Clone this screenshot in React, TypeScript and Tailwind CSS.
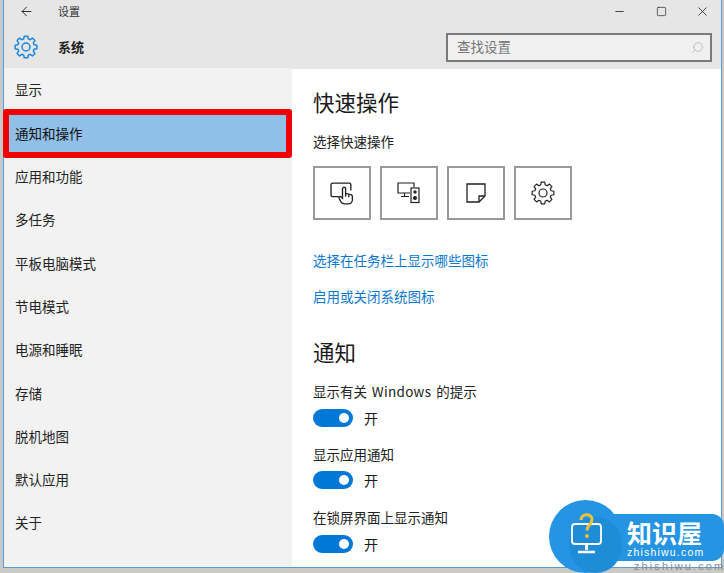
import { ArrowLeft, Minus, Square, X, Search } from "lucide-react"

const font = "font-['Noto_Sans_CJK_SC','Noto_Sans',sans-serif]"

const navItems = ["显示", "通知和操作", "应用和功能", "多任务", "平板电脑模式", "节电模式", "电源和睡眠", "存储", "脱机地图", "默认应用", "关于"]

// eight toothed gear, same outline as the windows settings glyph
function gearPath() {
  const pts: string[] = []
  for (let i = 0; i < 8; i++) {
    const a = (i * Math.PI) / 4
    const step = [
      [-0.27, 8.4],
      [-0.16, 11],
      [0.16, 11],
      [0.27, 8.4],
    ]
    step.forEach(([d, r]) => {
      pts.push(`${(12 + r * Math.cos(a + d)).toFixed(2)} ${(12 + r * Math.sin(a + d)).toFixed(2)}`)
    })
  }
  return `M${pts.join("L")}Z`
}

function Gear({ size, color, width }: { size: number; color: string; width: number }) {
  return (
    <svg width={size} height={size} viewBox="0 0 24 24" fill="none" stroke={color} strokeWidth={width} strokeLinejoin="round">
      <path d={gearPath()} />
      <circle cx="12" cy="12" r="4" />
    </svg>
  )
}

function TouchIcon() {
  return (
    <svg width="25" height="23" viewBox="0 0 24 22" fill="none" stroke="#222" strokeWidth="1.3">
      <path d="M9 14H2.5A1.5 1.5 0 0 1 1 12.500V2.500A1.500 1.500 0 0 1 2.500 1H18.500A1.500 1.500 0 0 1 20 2.500V8" />
      <path d="M12 6.500a1.500 1.500 0 0 1 3 0V11l4 .8a2.500 2.500 0 0 1 2.500 2.500V17a4 4 0 0 1-4 4H14a4 4 0 0 1-3.500-2l-1.800-3.500a1.200 1.200 0 0 1 2-1.200L12 15.500z" fill="#fff" />
      <path d="M15 11v3M18 12v2.500" />
    </svg>
  )
}

function ProjectIcon() {
  return (
    <svg width="24" height="22" viewBox="0 0 24 22" fill="none" stroke="#222" strokeWidth="1.2">
      <path d="M13 11H1V1H17V5" />
      <path d="M7.500 11v3M4 14.500h8" />
      <rect x="14" y="6" width="8" height="14.500" />
      <circle cx="18" cy="10" r="1.100" fill="#222" />
      <circle cx="18" cy="16" r="1.400" fill="#222" />
    </svg>
  )
}

function NoteIcon() {
  return (
    <svg width="20" height="20" viewBox="0 0 20 20" fill="none" stroke="#222" strokeWidth="1.3">
      <path d="M1 1H19V13L13 19H1Z" />
      <path d="M19 13H13V19" />
    </svg>
  )
}

function Toggle() {
  return (
    <div className="flex items-center gap-[11px] h-[20px]">
      <div className="flex items-center justify-end w-[40px] h-[18px] rounded-full bg-[#0078d7] pr-[4px]">
        <div className="w-[10px] h-[10px] rounded-full bg-white" />
      </div>
      <span className="text-[14px] leading-[20px] text-[#1a1a1a]">开</span>
    </div>
  )
}

function Logo() {
  return (
    <div className="absolute left-[549px] top-[500px] w-[175px] h-[73px]">
      <div className="absolute left-[60px] top-[14px] w-[115px] h-[47px] rounded-r-[12px] bg-[#2595e3]" />
      <div className="absolute left-0 top-0 w-[73px] h-[73px] rounded-full bg-[#2595e3]" />
      <div className="absolute left-[20px] top-[17px] w-[53px] h-[56px] rounded-full bg-[#1f8cd8]" />
      <svg className="absolute left-[20px] top-[12px]" width="36" height="44" viewBox="0 0 36 44" fill="none">
        <rect x="3" y="12" width="29" height="20" rx="3" stroke="#fff" strokeWidth="1.800" />
        <path d="M17.500 32v6" stroke="#fff" strokeWidth="3" />
        <path d="M9 40h17" stroke="#fff" strokeWidth="2.500" />
        <path d="M12 8c0-7 11-7 11-.5 0 5-5 5-5 11" stroke="#f4c138" strokeWidth="3" />
        <circle cx="18" cy="24" r="2" fill="#f4c138" />
      </svg>
      <div className="absolute left-[78px] top-[18px] text-[25px] leading-[28px] font-bold text-white">知识屋</div>
      <div className="absolute left-[78px] top-[47px] text-[10.500px] leading-[11px] text-white tracking-[1.200px] font-['Liberation_Sans',sans-serif]">zhishiwu.com</div>
      <div className="absolute left-[85px] top-[61px] text-[11px] leading-[11px] text-[#8a8a8a] tracking-[2.100px] font-['Liberation_Sans',sans-serif]">zhishiwu.com</div>
    </div>
  )
}

export default function App() {
  return (
    <div className={`relative w-[724px] h-[573px] overflow-hidden bg-[#c9c9c7] pl-[3px] pr-[2px] pb-[5px] ${font}`}>
      <div className="flex flex-col h-full border-x border-b border-[#5b9bd5] bg-white">
        {/* header */}
        <div className="shrink-0 h-[69px] bg-[#e6e6e6]">
          <div className="flex items-center h-[22px] pl-[15px]">
            <ArrowLeft size={15} strokeWidth={1.5} color="#222" />
            <span className="ml-[24px] text-[11px] text-[#333]">设置</span>
            <div className="flex items-center ml-auto text-[#222]">
              <Minus size={13} strokeWidth={1.5} />
              <Square size={11} strokeWidth={1.5} className="ml-[30px]" />
              <X size={15} strokeWidth={1.3} className="ml-[28px] mr-[11px]" />
            </div>
          </div>
          <div className="flex items-center h-[47px] pl-[10px] pt-[3px]">
            <Gear size={24} color="#1b86de" width={1.5} />
            <span className="ml-[20px] text-[13px] font-bold text-[#222]">系统</span>
            <div className="flex items-center ml-auto mr-[9px] w-[266px] h-[29px] border-2 border-[#7a7a7a] bg-[#f0f0f0] pl-[9px] pr-[6px]">
              <span className="-mt-[2px] text-[13.500px] text-[#777]">查找设置</span>
              <Search size={13} strokeWidth={1} color="#999" className="ml-auto -scale-x-100" />
            </div>
          </div>
        </div>

        <div className="flex flex-1 min-h-0">
          {/* sidebar */}
          <div className="flex flex-col shrink-0 w-[288px] bg-[#f2f2f2] -mt-[1.250px]">
            {navItems.map((item, i) =>
              i === 1 ? (
                <div key={item} className="flex items-center h-[49px] -ml-[1px] mt-[-1.750px] mb-[-3.750px] border-[6px] border-[#f00000] rounded-[3px] bg-[#90c0e8] pl-[6px] pb-[2px] text-[13.500px] text-[#111] relative">
                  {item}
                </div>
              ) : (
                <div key={item} className="flex items-center h-[43.300px] pl-[11px] text-[13.500px] text-[#222]">
                  {item}
                </div>
              ),
            )}
          </div>

          {/* content */}
          <div className="flex-1 min-w-0 pl-[21px] text-[#222]">
            <h1 className="mt-[17px] text-[21.500px] leading-[32px] text-[#1a1a1a]">快速操作</h1>
            <p className="mt-[13px] text-[13.500px] leading-[20px]">选择快速操作</p>
            <div className="flex gap-[9px] mt-[15px]">
              <div className="flex items-center justify-center w-[58px] h-[54px] border-2 border-[#999]"><TouchIcon /></div>
              <div className="flex items-center justify-center w-[58px] h-[54px] border-2 border-[#999]"><ProjectIcon /></div>
              <div className="flex items-center justify-center w-[58px] h-[54px] border-2 border-[#999]"><NoteIcon /></div>
              <div className="flex items-center justify-center w-[58px] h-[54px] border-2 border-[#999]"><Gear size={24} color="#222" width={1.2} /></div>
            </div>
            <div className="mt-[30px] text-[13.500px] leading-[20px] text-[#0a78d2]">选择在任务栏上显示哪些图标</div>
            <div className="mt-[16px] text-[13.500px] leading-[20px] text-[#0a78d2]">启用或关闭系统图标</div>
            <h2 className="mt-[30px] text-[21.500px] leading-[32px] text-[#1a1a1a]">通知</h2>
            <p className="mt-[13px] text-[13.500px] leading-[20px]">显示有关<span className="mx-[1.500px] tracking-[0.300px]"> Windows </span>的提示</p>
            <div className="mt-[7px]"><Toggle /></div>
            <p className="mt-[16px] text-[13.500px] leading-[20px]">显示应用通知</p>
            <div className="mt-[6px]"><Toggle /></div>
            <p className="mt-[17px] text-[13.500px] leading-[20px]">在锁屏界面上显示通知</p>
            <div className="mt-[7px]"><Toggle /></div>
          </div>
        </div>
      </div>
      <Logo />
    </div>
  )
}
